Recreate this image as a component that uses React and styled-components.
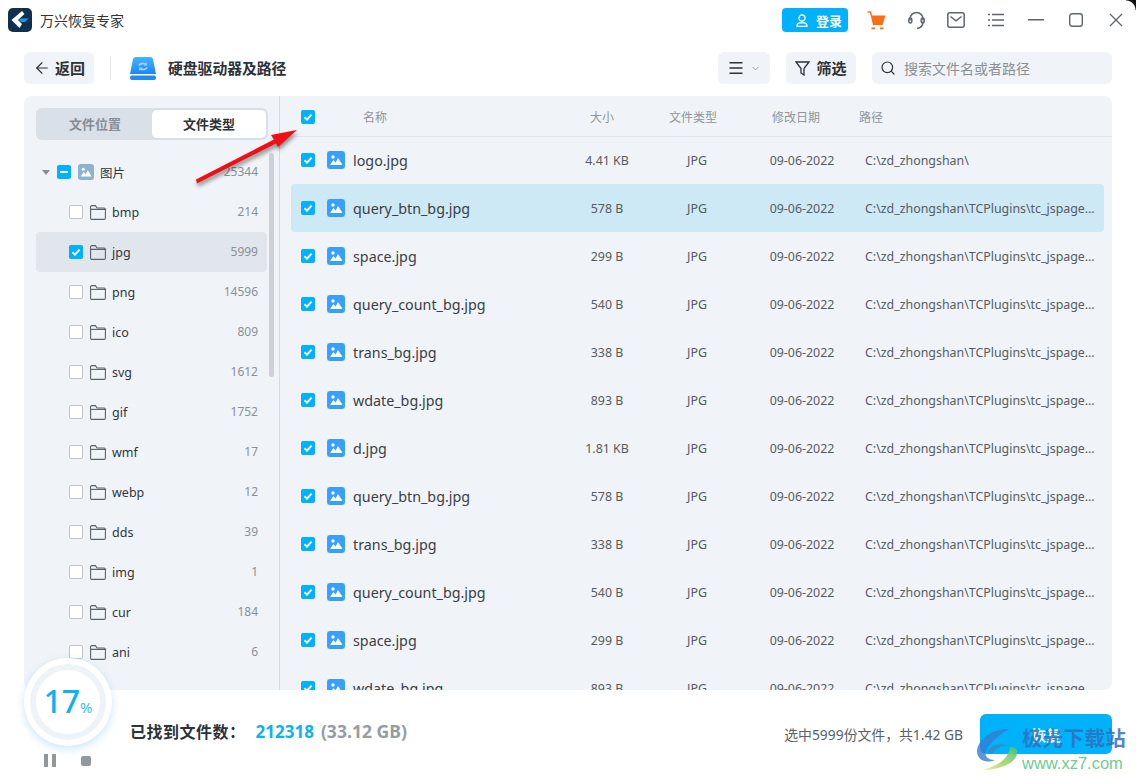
import React from "react";
import styled, { createGlobalStyle } from "styled-components";
import { ArrowLeft, ChevronDown, Menu, Search } from "lucide-react";

const folders = [
  { name: "bmp", count: 214 },
  { name: "jpg", count: 5999, active: true },
  { name: "png", count: 14596 },
  { name: "ico", count: 809 },
  { name: "svg", count: 1612 },
  { name: "gif", count: 1752 },
  { name: "wmf", count: 17 },
  { name: "webp", count: 12 },
  { name: "dds", count: 39 },
  { name: "img", count: 1 },
  { name: "cur", count: 184 },
  { name: "ani", count: 6 },
];

const deep = "C:\\zd_zhongshan\\TCPlugins\\tc_jspages\\wdate\\skin\\default\\images";
const files = [
  { name: "logo.jpg", size: "4.41 KB", path: "C:\\zd_zhongshan\\" },
  { name: "query_btn_bg.jpg", size: "578 B", path: deep, active: true },
  { name: "space.jpg", size: "299 B", path: deep },
  { name: "query_count_bg.jpg", size: "540 B", path: deep },
  { name: "trans_bg.jpg", size: "338 B", path: deep },
  { name: "wdate_bg.jpg", size: "893 B", path: deep },
  { name: "d.jpg", size: "1.81 KB", path: deep },
  { name: "query_btn_bg.jpg", size: "578 B", path: deep },
  { name: "trans_bg.jpg", size: "338 B", path: deep },
  { name: "query_count_bg.jpg", size: "540 B", path: deep },
  { name: "space.jpg", size: "299 B", path: deep },
  { name: "wdate_bg.jpg", size: "893 B", path: deep },
];

const Global = createGlobalStyle`
  html, body {
    margin: 0;
    height: 100%;
    background: #fff;
    overflow: hidden;
  }
  body {
    font-family: "Noto Sans", "Noto Sans CJK SC", sans-serif;
    color: #30363c;
  }
`;

const Page = styled.div`
  position: relative;
  display: flex;
  flex-direction: column;
  height: 778px;
  overflow: hidden;
`;

const TitleBar = styled.div`
  display: flex;
  align-items: center;
  height: 40px;
  padding-left: 8px;
  flex-shrink: 0;
`;

const AppName = styled.span`
  margin-left: 8px;
  font-size: 14px;
  color: #333;
  flex: 1;
`;

const Login = styled.button`
  display: flex;
  align-items: center;
  justify-content: center;
  gap: 8px;
  width: 66px;
  height: 24px;
  margin-right: 8px;
  padding: 0 0 0 8px;
  border: none;
  border-radius: 4px;
  background: #00b2fc;
  color: #fff;
  font: 700 13px "Noto Sans CJK SC", sans-serif;
`;

const IconSlot = styled.div`
  display: flex;
  align-items: center;
  justify-content: center;
  width: 40px;
  height: 24px;
  color: #5f666d;
`;

const Corner = styled.div`
  position: absolute;
  right: 0;
  top: 0;
  width: 10px;
  height: 10px;
  background: radial-gradient(circle at 0 100%, transparent 9px, #111 10px);
`;

const Toolbar = styled.div`
  display: flex;
  align-items: center;
  height: 32px;
  margin-top: 12px;
  padding: 0 24px;
  flex-shrink: 0;
`;

const ToolButton = styled.button`
  display: flex;
  align-items: center;
  justify-content: center;
  gap: ${(p) => p.$gap || 4}px;
  width: ${(p) => p.$width}px;
  height: 32px;
  margin-left: ${(p) => p.$left || 0}px;
  padding: 0;
  border: none;
  border-radius: 6px;
  background: #f0f4f8;
  color: #2c3238;
  font: 700 15px/30px "Noto Sans CJK SC", sans-serif;
`;

const Divider = styled.div`
  width: 1px;
  height: 24px;
  margin: 0 19px 0 16px;
  background: #e6eaee;
`;

const DriveName = styled.span`
  margin: 0 0 2px 12px;
  font: 700 14.8px "Noto Sans CJK SC", sans-serif;
  color: #2c3238;
  flex: 1;
`;

const SearchBox = styled.div`
  display: flex;
  align-items: center;
  gap: 8px;
  width: 240px;
  height: 32px;
  margin-left: 16px;
  padding-left: 8px;
  box-sizing: border-box;
  border-radius: 6px;
  background: #f0f4f8;
  color: #8b9096;
  font: 400 14px "Noto Sans CJK SC", sans-serif;
  svg {
    color: #2c3238;
  }
`;

const Main = styled.div`
  display: flex;
  height: 594px;
  margin: 12px 24px 0;
  border-radius: 8px;
  background: #f0f4f8;
  overflow: hidden;
  flex-shrink: 0;
`;

const Sidebar = styled.div`
  position: relative;
  width: 243px;
  flex-shrink: 0;
  border-right: 1px solid #d5dade;
  padding: 12px 0 0 12px;
`;

const Tabs = styled.div`
  display: flex;
  align-items: stretch;
  box-sizing: border-box;
  width: 232px;
  height: 32px;
  padding: 2px;
  border-radius: 6px;
  background: #d9e0e7;
`;

const Tab = styled.div`
  display: flex;
  align-items: center;
  justify-content: center;
  flex: 1;
  padding-bottom: 2px;
  border-radius: 5px;
  background: ${(p) => (p.$active ? "#fff" : "transparent")};
  color: ${(p) => (p.$active ? "#2c3238" : "#868d94")};
  font: 700 13px "Noto Sans CJK SC", sans-serif;
`;

const Tree = styled.div`
  width: 231px;
  margin-top: 12px;
`;

const TreeRow = styled.div`
  display: flex;
  align-items: center;
  height: 40px;
  padding-left: ${(p) => p.$indent}px;
  padding-right: 9px;
  border-radius: 4px;
  background: ${(p) => (p.$active ? "#e1e6ec" : "transparent")};
  font-size: 12.5px;
  color: #30363c;
`;

const Caret = styled.div`
  width: 0;
  height: 0;
  margin-right: 7px;
  border-left: 4px solid transparent;
  border-right: 4px solid transparent;
  border-top: 5px solid #868d94;
`;

const TreeLabel = styled.span`
  flex: 1;
  margin-left: 6px;
`;

const Count = styled.span`
  margin-bottom: 2px;
  color: #8a9097;
  font-size: 12px;
`;

const ScrollThumb = styled.div`
  position: absolute;
  left: 245px;
  top: 57px;
  width: 5px;
  height: 224px;
  border-radius: 3px;
  background: #cdd1d5;
`;

const List = styled.div`
  flex: 1;
  min-width: 0;
`;

const ListHead = styled.div`
  display: grid;
  grid-template-columns: 62px 227px 79px 103px 87px auto;
  align-items: center;
  box-sizing: border-box;
  height: 41px;
  padding: 2px 0 0 21px;
  border-bottom: 1px solid #e0e5ea;
  font-size: 12px;
  color: #8f959c;
`;

const Rows = styled.div`
  margin-top: -1px;
  padding: 0 8px 0 11px;
`;

const Row = styled.div`
  display: grid;
  grid-template-columns: 26px 26px 214px 80px 100px 110px minmax(0, 1fr);
  align-items: center;
  height: 48px;
  padding-left: 10px;
  border-radius: 4px;
  background: ${(p) => (p.$active ? "#cce9f5" : "transparent")};
  font-size: 12.4px;
  color: #555c63;
`;

const FileName = styled.span`
  font-size: 14.3px;
  color: #3a4046;
`;

const Center = styled.span`
  text-align: center;
`;

const PathText = styled.span`
  margin-left: 8px;
  padding-right: 6px;
  white-space: nowrap;
  overflow: hidden;
  text-overflow: ellipsis;
`;

const Box = styled.span`
  display: flex;
  align-items: center;
  justify-content: center;
  box-sizing: border-box;
  width: 14px;
  height: 14px;
  flex-shrink: 0;
  border-radius: 2px;
  background: ${(p) => (p.$on ? "#00b2fc" : "#fff")};
  border: ${(p) => (p.$on ? "none" : "1px solid #bfc4c9")};
`;

const FolderWrap = styled.span`
  display: flex;
  margin-left: 7px;
  color: #5a6168;
`;

const GroupIcon = styled.span`
  display: flex;
  margin-left: 7px;
`;

const Footer = styled.div`
  display: flex;
  align-items: center;
  height: 88px;
  padding: 0 24px 0 130px;
  flex-shrink: 0;
`;

const Found = styled.div`
  display: flex;
  align-items: baseline;
  flex: 1;
  margin-bottom: 6px;
  font: 700 16px "Noto Sans CJK SC", sans-serif;
  letter-spacing: 0.5px;
  color: #2c3238;
`;

const FoundNum = styled.span`
  margin-left: 10px;
  font: 700 17px "Noto Sans", sans-serif;
  letter-spacing: 0;
  color: #0db1f5;
`;

const FoundSize = styled.span`
  margin-left: 7px;
  font: 700 17.6px "Noto Sans", sans-serif;
  letter-spacing: 0;
  color: #969ca3;
`;

const Selected = styled.span`
  margin-right: 17px;
  font-size: 13.85px;
  color: #5a6168;
`;

const Recover = styled.button`
  width: 132px;
  height: 40px;
  padding: 0;
  border: none;
  border-radius: 6px;
  background: #00b2fa;
  color: #fff;
  font: 700 15px "Noto Sans CJK SC", sans-serif;
`;

const Progress = styled.div`
  position: absolute;
  left: 24px;
  top: 658px;
  display: flex;
  align-items: center;
  justify-content: center;
  width: 88px;
  height: 88px;
  border-radius: 50%;
  background: #fff;
  box-shadow: 0 3px 8px rgba(60, 165, 235, 0.28);
`;

const ProgressRing = styled.div`
  display: flex;
  align-items: baseline;
  justify-content: center;
  box-sizing: border-box;
  width: 76px;
  height: 76px;
  padding-top: 15px;
  border-radius: 50%;
  border: 6px solid #edf3f7;
  background: #fff;
  color: #0db1f5;
`;

const Percent = styled.span`
  font: 500 32px/1 "Noto Sans", sans-serif;
`;

const PercentSign = styled.span`
  font: 400 15px/1 "Noto Sans", sans-serif;
  color: #35bdf3;
`;

const Controls = styled.div`
  position: absolute;
  left: 44px;
  top: 754px;
  display: flex;
  align-items: center;
  gap: 25px;
`;

const Arrow = styled.svg`
  position: absolute;
  left: 190px;
  top: 125px;
  filter: drop-shadow(1px 3px 2px rgba(0, 0, 0, 0.45));
`;

const Watermark = styled.div`
  position: absolute;
  left: 975px;
  top: 724px;
  display: flex;
  width: 155px;
  height: 54px;
`;

const WatermarkText = styled.div`
  display: flex;
  flex-direction: column;
  margin-left: 3px;
`;

const WatermarkName = styled.span`
  font: 700 20.5px/26px "Noto Sans CJK SC", sans-serif;
  color: rgba(46, 112, 190, 0.85);
  letter-spacing: 0.3px;
`;

const WatermarkUrl = styled.span`
  margin-top: 2px;
  font: 400 16.5px/22px "Liberation Sans", sans-serif;
  color: rgba(85, 200, 130, 0.9);
`;

function Check({ state }) {
  if (state === "off") return <Box />;
  return (
    <Box $on>
      {state === "mixed" ? (
        <svg width="10" height="10" viewBox="0 0 10 10">
          <rect x="1" y="4" width="8" height="2" fill="#fff" rx="0.5" />
        </svg>
      ) : (
        <svg width="10" height="10" viewBox="0 0 10 10" fill="none">
          <path d="M1.5 5.2 4 7.6 8.6 2.6" stroke="#fff" strokeWidth="2" />
        </svg>
      )}
    </Box>
  );
}

function ImageIcon({ size = 18, color = "#379ffc" }) {
  return (
    <svg width={size} height={size} viewBox="0 0 18 18">
      <rect width="18" height="18" rx="3" fill={color} />
      <circle cx="6" cy="6" r="1.7" fill="#fff" />
      <path d="M3 14 6.500 9 8.600 11.400 11 7 15.500 14Z" fill="#fff" />
    </svg>
  );
}

function Folder() {
  return (
    <svg width="16" height="15" viewBox="0 0 16 15" fill="none" stroke="currentColor" strokeWidth="1.1">
      <path d="M.6 13V2A1.4 1.4 0 0 1 2 .6h3.4L7 3h7a1.4 1.4 0 0 1 1.4 1.4V13a1.4 1.4 0 0 1-1.4 1.4H2A1.4 1.4 0 0 1 .6 13Z" />
      <path d="M.6 4.400h14.800" />
    </svg>
  );
}

function Logo() {
  return (
    <svg width="24" height="24" viewBox="0 0 24 24">
      <rect width="24" height="24" rx="5" fill="#10304d" />
      <path d="M14 3 16.500 6 10 12 14 16 11.500 20 3.500 12Z" fill="#fff" />
      <path d="M13 10.500h7.500l-3.600 3.500h-3.900L11 12Z" fill="#1a9be6" />
    </svg>
  );
}

function Drive() {
  return (
    <svg width="26" height="23" viewBox="0 0 26 23">
      <defs>
        <linearGradient id="drive" x1="0" y1="0" x2="0" y2="1">
          <stop offset="0" stopColor="#43b4ff" />
          <stop offset="1" stopColor="#1f86f2" />
        </linearGradient>
      </defs>
      <path d="M6 0h14c1.500 0 2.600.8 3 2.300L26 17H0L3 2.300C3.400.8 4.500 0 6 0Z" fill="url(#drive)" />
      <rect y="18.500" width="26" height="4.500" rx="2" fill="#1f8bf5" />
      <path d="M9 8.500C9.800 6.500 13.500 5.800 15.800 7.300M17 10.500c-.8 2-4.500 2.700-6.800 1.200" fill="none" stroke="#9fd8ff" strokeWidth="1.700" />
      <path d="M16.800 5.200v3.300h-3.200zM9.200 13.700v-3.300h3.200z" fill="#9fd8ff" />
    </svg>
  );
}

function Cart() {
  return (
    <svg width="19" height="19" viewBox="0 0 19 19">
      <path d="M.5 1h3l1 4" fill="none" stroke="#ff7a1a" strokeWidth="1.500" />
      <path d="M3.800 4.500H18.500L15.500 14H6Z" fill="#ff6d12" />
      <rect x="4.500" y="16.500" width="3.500" height="1.800" fill="#ff6d12" />
      <rect x="13" y="16.500" width="3.500" height="1.800" fill="#ff6d12" />
    </svg>
  );
}

function Headset() {
  return (
    <svg width="17" height="19" viewBox="0 0 17 19" fill="none" stroke="currentColor" strokeWidth="1.500">
      <path d="M2 9.500V8a6.500 6.500 0 0 1 13 0v1.500" />
      <path d="M15 10.500c0 4-2.200 6.500-6 7" />
      <rect x=".8" y="7" width="3" height="5" rx="1.500" />
      <rect x="13.200" y="7" width="3" height="5" rx="1.500" />
    </svg>
  );
}

function Mail() {
  return (
    <svg width="18" height="16" viewBox="0 0 18 16" fill="none" stroke="currentColor" strokeWidth="1.500">
      <rect x=".8" y=".8" width="16.400" height="14.400" rx="2" />
      <path d="M3.500 4.500 9 8.800l5.500-4.300" />
    </svg>
  );
}

function MenuList() {
  return (
    <svg width="16" height="14" viewBox="0 0 16 14" stroke="currentColor" strokeWidth="1.300">
      <path d="M0 1.500h2M4 1.500h12M0 7h2M4 7h12M0 12.500h2M4 12.500h12" />
    </svg>
  );
}

function Minimize() {
  return (
    <svg width="16" height="2" viewBox="0 0 16 2">
      <rect width="16" height="1.500" fill="currentColor" />
    </svg>
  );
}

function Maximize() {
  return (
    <svg width="14" height="14" viewBox="0 0 14 14" fill="none" stroke="currentColor" strokeWidth="1.400">
      <rect x=".7" y=".7" width="12.600" height="12.600" rx="2.500" />
    </svg>
  );
}

function Close() {
  return (
    <svg width="14" height="14" viewBox="0 0 14 14" stroke="currentColor" strokeWidth="1.300">
      <path d="M1 1l12 12M13 1 1 13" />
    </svg>
  );
}

function User() {
  return (
    <svg width="12" height="13" viewBox="0 0 12 13" fill="none" stroke="#fff" strokeWidth="1.300">
      <circle cx="6" cy="4" r="3" />
      <path d="M1 12.300c0-2 1.500-3.300 2.500-3.500h5c1 .2 2.500 1.500 2.500 3.500Z" />
    </svg>
  );
}

function FunnelIcon() {
  return (
    <svg width="15" height="15" viewBox="0 0 15 15" fill="none" stroke="#2c3238" strokeWidth="1.300">
      <path d="M1 1h13L9 7.500V14L6 12V7.500Z" />
    </svg>
  );
}

function PauseIcon() {
  return (
    <svg width="12" height="13" viewBox="0 0 12 13" fill="#92979c">
      <rect width="4" height="13" />
      <rect x="8" width="4" height="13" />
    </svg>
  );
}

function StopIcon() {
  return (
    <svg width="10" height="10" viewBox="0 0 10 10">
      <rect width="10" height="10" rx="2" fill="#92979c" />
    </svg>
  );
}

function Swirl() {
  return (
    <svg width="44" height="54" viewBox="0 0 44 54">
      <defs>
        <linearGradient id="swirlGreen" x1="1" y1="0" x2="0" y2="1">
          <stop offset="0" stopColor="#4cc07c" stopOpacity=".9" />
          <stop offset="0.6" stopColor="#a9d866" stopOpacity=".9" />
          <stop offset="1" stopColor="#f0e88c" stopOpacity=".8" />
        </linearGradient>
      </defs>
      <path d="M34 5C20 4 3 14 2 27c0 9 9 13 18 9-8 0-12-5-8-11C16 17 26 10 34 5Z" fill="rgba(52,125,210,.8)" />
      <path d="M13 27c3-6 13-9 21-5-8-1-13 2-15 6-2 3-6 2-6-1Z" fill="rgba(70,130,190,.75)" />
      <path d="M42 26c2 11-12 19-34 20 14-4 26-11 27-23 3 0 6 1 7 3Z" fill="url(#swirlGreen)" />
    </svg>
  );
}

export default function App() {
  return (
    <Page>
      <Global />
      <TitleBar>
        <Logo />
        <AppName>万兴恢复专家</AppName>
        <Login>
          <User />
          登录
        </Login>
        <IconSlot><Cart /></IconSlot>
        <IconSlot><Headset /></IconSlot>
        <IconSlot><Mail /></IconSlot>
        <IconSlot><MenuList /></IconSlot>
        <IconSlot><Minimize /></IconSlot>
        <IconSlot><Maximize /></IconSlot>
        <IconSlot><Close /></IconSlot>
      </TitleBar>
      <Corner />

      <Toolbar>
        <ToolButton $width={70} $gap={4}>
          <ArrowLeft size={18} strokeWidth={1.5} />
          返回
        </ToolButton>
        <Divider />
        <Drive />
        <DriveName>硬盘驱动器及路径</DriveName>
        <ToolButton $width={52} $gap={5}>
          <Menu size={18} strokeWidth={1.9} />
          <ChevronDown size={11} color="#9aa0a6" />
        </ToolButton>
        <ToolButton $width={70} $left={16} $gap={6}>
          <FunnelIcon />
          筛选
        </ToolButton>
        <SearchBox>
          <Search size={16} strokeWidth={1.8} />
          搜索文件名或者路径
        </SearchBox>
      </Toolbar>

      <Main>
        <Sidebar>
          <Tabs>
            <Tab>文件位置</Tab>
            <Tab $active>文件类型</Tab>
          </Tabs>
          <Tree>
            <TreeRow $indent={6}>
              <Caret />
              <Check state="mixed" />
              <GroupIcon><ImageIcon size={16} color="#8fb2cf" /></GroupIcon>
              <TreeLabel>图片</TreeLabel>
              <Count>25344</Count>
            </TreeRow>
            {folders.map((f) => (
              <TreeRow key={f.name} $indent={33} $active={f.active}>
                <Check state={f.active ? "on" : "off"} />
                <FolderWrap><Folder /></FolderWrap>
                <TreeLabel>{f.name}</TreeLabel>
                <Count>{f.count}</Count>
              </TreeRow>
            ))}
          </Tree>
          <ScrollThumb />
        </Sidebar>

        <List>
          <ListHead>
            <Check state="on" />
            <span>名称</span>
            <span>大小</span>
            <span>文件类型</span>
            <span>修改日期</span>
            <span>路径</span>
          </ListHead>
          <Rows>
            {files.map((f, i) => (
              <Row key={i} $active={f.active}>
                <Check state="on" />
                <ImageIcon />
                <FileName>{f.name}</FileName>
                <Center>{f.size}</Center>
                <Center>JPG</Center>
                <Center>09-06-2022</Center>
                <PathText>{f.path}</PathText>
              </Row>
            ))}
          </Rows>
        </List>
      </Main>

      <Footer>
        <Found>
          已找到文件数：
          <FoundNum>212318</FoundNum>
          <FoundSize>(33.12 GB)</FoundSize>
        </Found>
        <Selected>选中5999份文件，共1.42 GB</Selected>
        <Recover>恢复</Recover>
      </Footer>

      <Progress>
        <ProgressRing>
          <Percent>17</Percent>
          <PercentSign>%</PercentSign>
        </ProgressRing>
      </Progress>
      <Controls>
        <PauseIcon />
        <StopIcon />
      </Controls>

      <Arrow width="115" height="65" viewBox="0 0 115 65">
        <path d="M107 5 81 10 84 14.500 6 54.500 7 58.500 86 18.500 88 22Z" fill="#ee1015" />
      </Arrow>

      <Watermark>
        <Swirl />
        <WatermarkText>
          <WatermarkName>极光下载站</WatermarkName>
          <WatermarkUrl>www.xz7.com</WatermarkUrl>
        </WatermarkText>
      </Watermark>
    </Page>
  );
}
